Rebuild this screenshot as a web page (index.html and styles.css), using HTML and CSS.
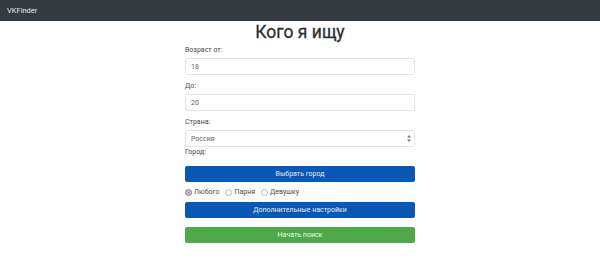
FILE: index.html
```html
<!DOCTYPE html>
<html lang="ru">
<head>
    <meta charset="UTF-8">
    <meta name="viewport" content="width=device-width, initial-scale=1.0">
    <title>VKFinder</title>
    <link rel="stylesheet" href="styles.css">
</head>
<body>
    <nav class="navbar">
        <span class="brand">VKFinder</span>
    </nav>

    <div class="container">
        <h1>Кого я ищу</h1>
        <form id="searchForm">
            <!-- Age range -->
            <div class="form-group">
                <label for="ageFrom">Возраст от:</label>
                <input type="text" id="ageFrom" class="form-control" value="18">
            </div>
            <div class="form-group">
                <label for="ageTo">До:</label>
                <input type="text" id="ageTo" class="form-control" value="20">
            </div>

            <!-- Country -->
            <label for="country">Страна:</label>
            <select id="country" class="form-control">
                <option>Россия</option>
            </select>

            <!-- City -->
            <label class="city-label">Город:</label>
            <button type="button" class="btn btn-primary">Выбрать город</button>

            <!-- Sex -->
            <div class="sex-options">
                <label class="radio"><input type="radio" name="sex" value="any" checked><span>Любого</span></label>
                <label class="radio"><input type="radio" name="sex" value="male"><span>Парня</span></label>
                <label class="radio"><input type="radio" name="sex" value="female"><span>Девушку</span></label>
            </div>

            <button type="button" class="btn btn-primary">Дополнительные настройки</button>
            <button type="button" class="btn btn-success">Начать поиск</button>
        </form>
    </div>
</body>
</html>
```

FILE: styles.css
```css
/* General styling */
body {
    margin: 0;
    background-color: #ffffff;
    color: #4a4a4a;
    font-family: Roboto, 'Liberation Sans', sans-serif;
    font-size: 7px;
    font-weight: 400;
}

/* Navbar */
.navbar {
    height: 21px;
    background-color: #343a40;
    display: flex;
    align-items: center;
    padding: 0 7px;
}

.brand {
    color: #e8e9ea;
    font-size: 7.5px;
}

/* Form */
.container {
    width: 230px;
    margin: 0 auto;
}

h1 {
    font-size: 17.5px;
    font-weight: 400;
    -webkit-text-stroke: 0.3px #2a2d31;
    line-height: 22px;
    text-align: center;
    color: #2a2d31;
    margin: 0 0 2px;
}

label {
    display: block;
    line-height: 11px;
    margin-bottom: 2px;
}

.form-group {
    margin-bottom: 6px;
}

.form-control {
    display: block;
    box-sizing: border-box;
    width: 100%;
    height: 17px;
    padding: 0 5px;
    border: 1px solid #e2e5e9;
    border-radius: 2px;
    font-family: inherit;
    font-size: 7px;
    color: #666666;
    background-color: #ffffff;
}

select.form-control {
    appearance: none;
    -webkit-appearance: none;
    background-image: url("data:image/svg+xml,%3Csvg xmlns='http://www.w3.org/2000/svg' width='4' height='7' viewBox='0 0 4 7'%3E%3Cpath d='M2 0L4 2.6H0z M2 7L0 4.4H4z' fill='%23777'/%3E%3C/svg%3E");
    background-repeat: no-repeat;
    background-position: right 3px center;
}

.city-label {
    margin-bottom: 8px;
}

/* Buttons */
.btn {
    display: block;
    width: 100%;
    height: 16px;
    padding: 0;
    border: none;
    border-radius: 2px;
    color: #e6eef8;
    font-family: inherit;
    font-size: 7px;
    font-weight: 400;
    cursor: pointer;
}

.btn-primary {
    background-color: #0657b6;
}

.btn-success {
    background-color: #4ea94b;
    color: #eef7ee;
    margin-top: 9px;
}

/* Radio buttons */
.sex-options {
    display: flex;
    gap: 6px;
    margin: 4px 0;
    height: 12px;
    align-items: center;
}

.radio {
    display: flex;
    align-items: center;
    margin: 0;
}

.radio input {
    appearance: none;
    -webkit-appearance: none;
    width: 7px;
    height: 7px;
    margin: 0 2px 0 0;
    border: 1px solid #b5b5b5;
    border-radius: 50%;
    box-sizing: border-box;
    background-color: #ffffff;
}

.radio input:checked {
    background-color: #8c8c8c;
    border-color: #8c8c8c;
    box-shadow: inset 0 0 0 1.5px #d0d0d0;
}
```
